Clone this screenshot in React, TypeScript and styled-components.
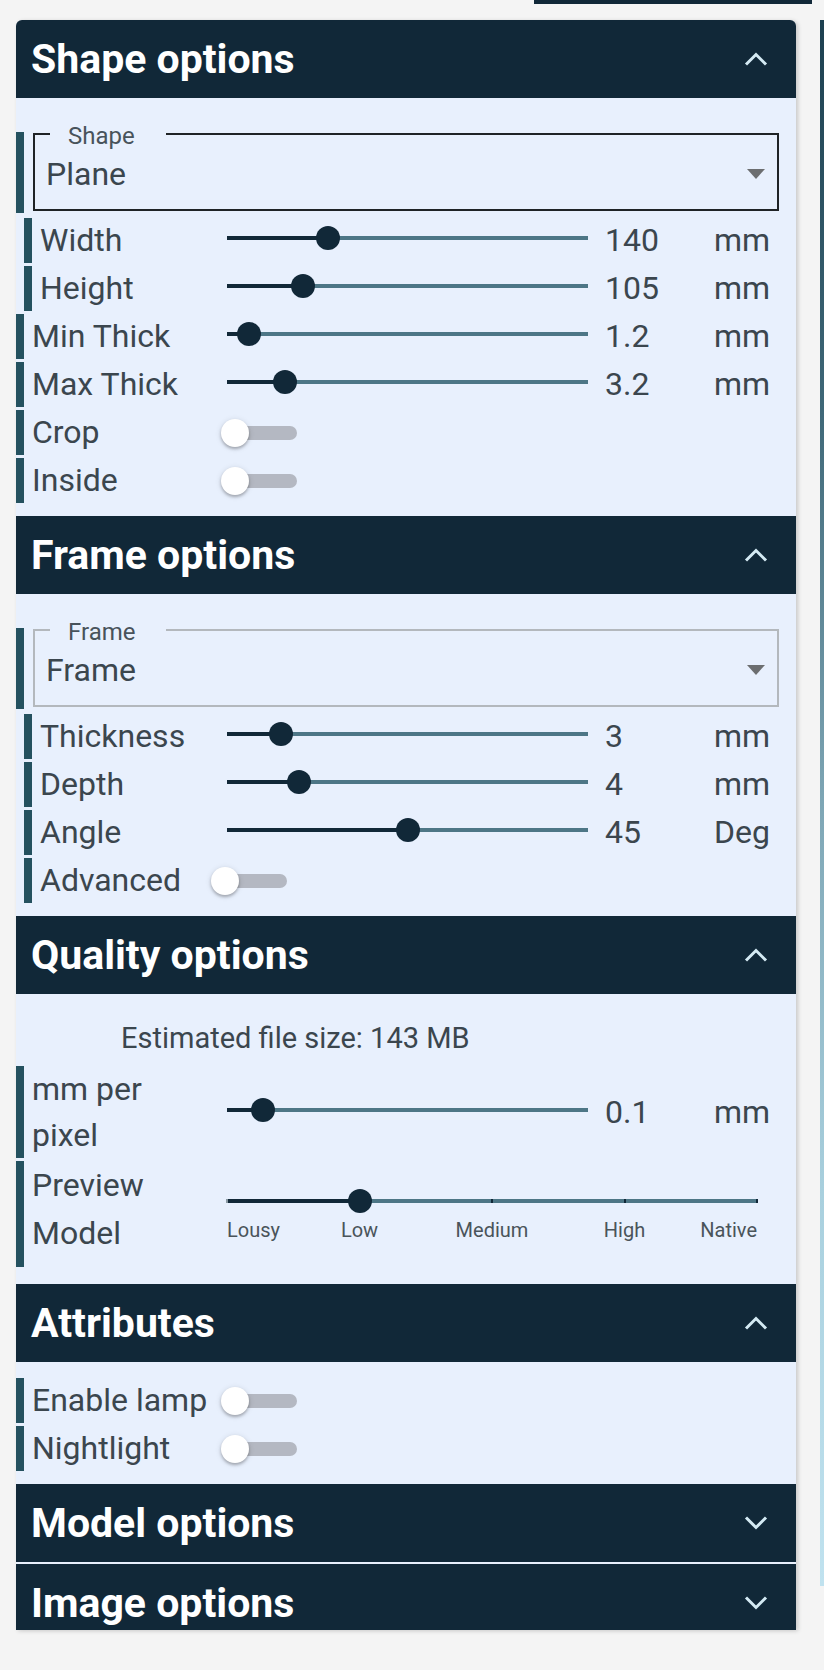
import React from 'react'
import styled, { createGlobalStyle } from 'styled-components'

const DARK = '#112838'
const BODY_BG = '#e8f0fd'
const BAR = '#24515f'
const TEXT = '#3b464e'

const GlobalStyle = createGlobalStyle`
  * { box-sizing: border-box; }
  body {
    margin: 0;
    background: #f4f4f4;
    font-family: Roboto, "Liberation Sans", sans-serif;
    color: ${TEXT};
  }
`

const Page = styled.div`
  width: 824px;
  height: 1670px;
  overflow: hidden;
`

const TopStrip = styled.div`
  height: 20px;
  padding-left: 534px;
`

const TopBar = styled.div`
  width: 278px;
  height: 4px;
  background: ${DARK};
`

const Main = styled.div`
  display: flex;
  align-items: flex-start;
  padding-left: 16px;
  gap: 24px;
`

const Panel = styled.div`
  width: 780px;
  height: 1610px;
  overflow: hidden;
  background: ${BODY_BG};
  border-radius: 6px 6px 0 0;
  box-shadow: 2px 1px 4px rgba(0, 0, 0, 0.18);
`

const SideStrip = styled.div`
  width: 4px;
  height: 1566px;
  background: linear-gradient(#1d4050, #3f6878 25%, #7ea6b5 50%, #a9d0de 75%, #c0e2ef);
`

const Section = styled.section`
  & + & {
    margin-top: 2px;
  }
`

const Header = styled.div`
  height: 78px;
  background: ${DARK};
  display: flex;
  align-items: center;
  justify-content: space-between;
  padding: 0 28px 0 15px;
`

const Title = styled.h2`
  margin: 0;
  color: #fff;
  font-size: 41px;
  font-weight: 700;
  line-height: normal;
`

const Body = styled.div<{ $top: number; $bottom: number }>`
  display: flex;
  flex-direction: column;
  gap: 3px;
  padding: ${(p) => p.$top}px 0 ${(p) => p.$bottom}px;
`

const Row = styled.div<{ $indent?: number; $labelWidth: number }>`
  display: grid;
  grid-template-columns: ${(p) => p.$labelWidth}px 1fr;
  align-items: center;
  min-height: 45px;
  margin-left: ${(p) => p.$indent ?? 0}px;
  border-left: 8px solid ${BAR};
`

const Label = styled.div<{ $lineHeight?: number }>`
  align-self: start;
  padding-left: 8px;
  font-size: 32px;
  line-height: ${(p) => p.$lineHeight ?? 45}px;
  white-space: nowrap;
`

const SelectRow = styled.div`
  border-left: 8px solid ${BAR};
  padding: 1px 17px 2px 9px;
  margin-bottom: 2px;
`

const SelectBox = styled.div<{ $focused?: boolean }>`
  position: relative;
  height: 78px;
  border: 2px solid ${(p) => (p.$focused ? '#1f2326' : '#b3b8bd')};
  display: flex;
  align-items: center;
  padding: 4px 12px 0 11px;
`

const FloatLabel = styled.span`
  position: absolute;
  top: -13px;
  left: 15px;
  padding: 0 31px 0 18px;
  background: ${BODY_BG};
  font-size: 24px;
  line-height: 28px;
  color: #48535b;
`

const SelectValue = styled.span`
  flex: 1;
  font-size: 32px;
`

const Caret = styled.span`
  width: 0;
  height: 0;
  border-left: 9.5px solid transparent;
  border-right: 9.5px solid transparent;
  border-top: 10px solid #6c6e70;
`

const SliderControl = styled.div`
  display: grid;
  grid-template-columns: 361px 126px 1fr;
  height: 45px;
`

const TrackBox = styled.div<{ $offset?: number }>`
  position: relative;
  height: 24px;
  margin-top: ${(p) => p.$offset ?? 8}px;
`

const Rail = styled.div`
  position: absolute;
  left: 0;
  right: 0;
  top: 10px;
  height: 4px;
  background: #4d7686;
`

const Fill = styled.div`
  position: absolute;
  left: 0;
  top: 10px;
  height: 4px;
  background: ${DARK};
`

const Thumb = styled.div`
  position: absolute;
  top: 0;
  width: 24px;
  height: 24px;
  margin-left: -12px;
  border-radius: 50%;
  background: ${DARK};
`

const Tick = styled.div<{ $active?: boolean }>`
  position: absolute;
  top: 10px;
  width: 2px;
  height: 4px;
  margin-left: -1px;
  background: ${(p) => (p.$active ? '#8a9aa3' : DARK)};
`

const Value = styled.div`
  padding-left: 17px;
  font-size: 32px;
  line-height: 45px;
`

const Unit = styled.div`
  font-size: 32px;
  line-height: 45px;
`

const MarksSlider = styled.div`
  align-self: start;
  width: 530px;
  padding: 28px 0 25px;
`

const MarkLabels = styled.div`
  position: relative;
  height: 24px;
  margin-top: 5px;
`

const MarkLabel = styled.span<{ $align: 'start' | 'center' | 'end' }>`
  position: absolute;
  top: 0;
  font-size: 20px;
  line-height: 24px;
  color: #4a545a;
  white-space: nowrap;
  transform: ${(p) =>
    p.$align === 'start' ? 'none' : p.$align === 'end' ? 'translateX(-100%)' : 'translateX(-50%)'};
`

const SwitchBox = styled.div`
  position: relative;
  width: 76px;
  height: 28px;
`

const SwitchTrack = styled.div`
  position: absolute;
  left: 12px;
  top: 7px;
  width: 64px;
  height: 14px;
  border-radius: 7px;
  background: #b4b8c2;
`

const SwitchThumb = styled.div`
  position: absolute;
  left: 0;
  top: 0;
  width: 28px;
  height: 28px;
  border-radius: 50%;
  background: #fff;
  box-shadow: 0 2px 3px rgba(0, 0, 0, 0.25), 0 1px 6px rgba(0, 0, 0, 0.12);
`

const Info = styled.div`
  padding-left: 105px;
  margin-bottom: 11px;
  font-size: 29px;
  line-height: 28px;
`

const Chevron = ({ up }: { up: boolean }) => (
  <svg width="24" height="14" viewBox="0 0 24 14">
    <polyline
      points={up ? '2,12.5 12,2.5 22,12.5' : '2,1.5 12,11.5 22,1.5'}
      fill="none"
      stroke="#d4eaf3"
      strokeWidth="3"
    />
  </svg>
)

const SectionHeader = ({ title, open }: { title: string; open: boolean }) => (
  <Header>
    <Title>{title}</Title>
    <Chevron up={open} />
  </Header>
)

const Track = ({ pct }: { pct: number }) => (
  <TrackBox>
    <Rail />
    <Fill style={{ width: `${pct}%` }} />
    <Thumb style={{ left: `${pct}%` }} />
  </TrackBox>
)

type SliderRowProps = {
  label: string
  pct: number
  value: string
  unit: string
  indent?: number
}

const SliderRow = ({ label, pct, value, unit, indent = 0 }: SliderRowProps) => (
  <Row $indent={indent} $labelWidth={203 - indent}>
    <Label>{label}</Label>
    <SliderControl>
      <Track pct={pct} />
      <Value>{value}</Value>
      <Unit>{unit}</Unit>
    </SliderControl>
  </Row>
)

const SwitchRow = ({ label, labelWidth, indent = 0 }: { label: string; labelWidth: number; indent?: number }) => (
  <Row $indent={indent} $labelWidth={labelWidth}>
    <Label>{label}</Label>
    <SwitchBox>
      <SwitchTrack />
      <SwitchThumb />
    </SwitchBox>
  </Row>
)

const SelectField = ({ label, value, focused }: { label: string; value: string; focused?: boolean }) => (
  <SelectRow>
    <SelectBox $focused={focused}>
      <FloatLabel>{label}</FloatLabel>
      <SelectValue>{value}</SelectValue>
      <Caret />
    </SelectBox>
  </SelectRow>
)

const QUALITY_MARKS = [
  { label: 'Lousy', align: 'start' as const },
  { label: 'Low', align: 'center' as const },
  { label: 'Medium', align: 'center' as const },
  { label: 'High', align: 'center' as const },
  { label: 'Native', align: 'end' as const },
]

const PreviewSlider = ({ index }: { index: number }) => {
  const last = QUALITY_MARKS.length - 1
  const pct = (index / last) * 100
  return (
    <MarksSlider>
      <TrackBox $offset={0}>
        <Rail />
        <Fill style={{ width: `${pct}%` }} />
        {QUALITY_MARKS.map((m, i) => {
          const at = (i / last) * 100
          return <Tick key={m.label} $active={at < pct} style={{ left: `${at}%` }} />
        })}
        <Thumb style={{ left: `${pct}%` }} />
      </TrackBox>
      <MarkLabels>
        {QUALITY_MARKS.map((m, i) => (
          <MarkLabel key={m.label} $align={m.align} style={{ left: `${(i / last) * 100}%` }}>
            {m.label}
          </MarkLabel>
        ))}
      </MarkLabels>
    </MarksSlider>
  )
}

export default function App() {
  return (
    <Page>
      <GlobalStyle />
      <TopStrip>
        <TopBar />
      </TopStrip>
      <Main>
        <Panel>
          <Section>
            <SectionHeader title="Shape options" open />
            <Body $top={34} $bottom={11}>
              <SelectField label="Shape" value="Plane" focused />
              <SliderRow label="Width" pct={28} value="140" unit="mm" indent={8} />
              <SliderRow label="Height" pct={21} value="105" unit="mm" indent={8} />
              <SliderRow label="Min Thick" pct={6} value="1.2" unit="mm" />
              <SliderRow label="Max Thick" pct={16} value="3.2" unit="mm" />
              <SwitchRow label="Crop" labelWidth={197} />
              <SwitchRow label="Inside" labelWidth={197} />
            </Body>
          </Section>

          <Section>
            <SectionHeader title="Frame options" open />
            <Body $top={34} $bottom={11}>
              <SelectField label="Frame" value="Frame" />
              <SliderRow label="Thickness" pct={15} value="3" unit="mm" indent={8} />
              <SliderRow label="Depth" pct={20} value="4" unit="mm" indent={8} />
              <SliderRow label="Angle" pct={50} value="45" unit="Deg" indent={8} />
              <SwitchRow label="Advanced" labelWidth={179} indent={8} />
            </Body>
          </Section>

          <Section>
            <SectionHeader title="Quality options" open />
            <Body $top={30} $bottom={15}>
              <Info>Estimated file size: 143 MB</Info>
              <Row $labelWidth={203}>
                <Label $lineHeight={46}>
                  mm per
                  <br />
                  pixel
                </Label>
                <SliderControl>
                  <Track pct={10} />
                  <Value>0.1</Value>
                  <Unit>mm</Unit>
                </SliderControl>
              </Row>
              <Row $labelWidth={203}>
                <Label $lineHeight={48}>
                  Preview
                  <br />
                  Model
                </Label>
                <PreviewSlider index={1} />
              </Row>
            </Body>
          </Section>

          <Section>
            <SectionHeader title="Attributes" open />
            <Body $top={16} $bottom={11}>
              <SwitchRow label="Enable lamp" labelWidth={197} />
              <SwitchRow label="Nightlight" labelWidth={197} />
            </Body>
          </Section>

          <Section>
            <SectionHeader title="Model options" open={false} />
          </Section>

          <Section>
            <SectionHeader title="Image options" open={false} />
          </Section>
        </Panel>
        <SideStrip />
      </Main>
    </Page>
  )
}
